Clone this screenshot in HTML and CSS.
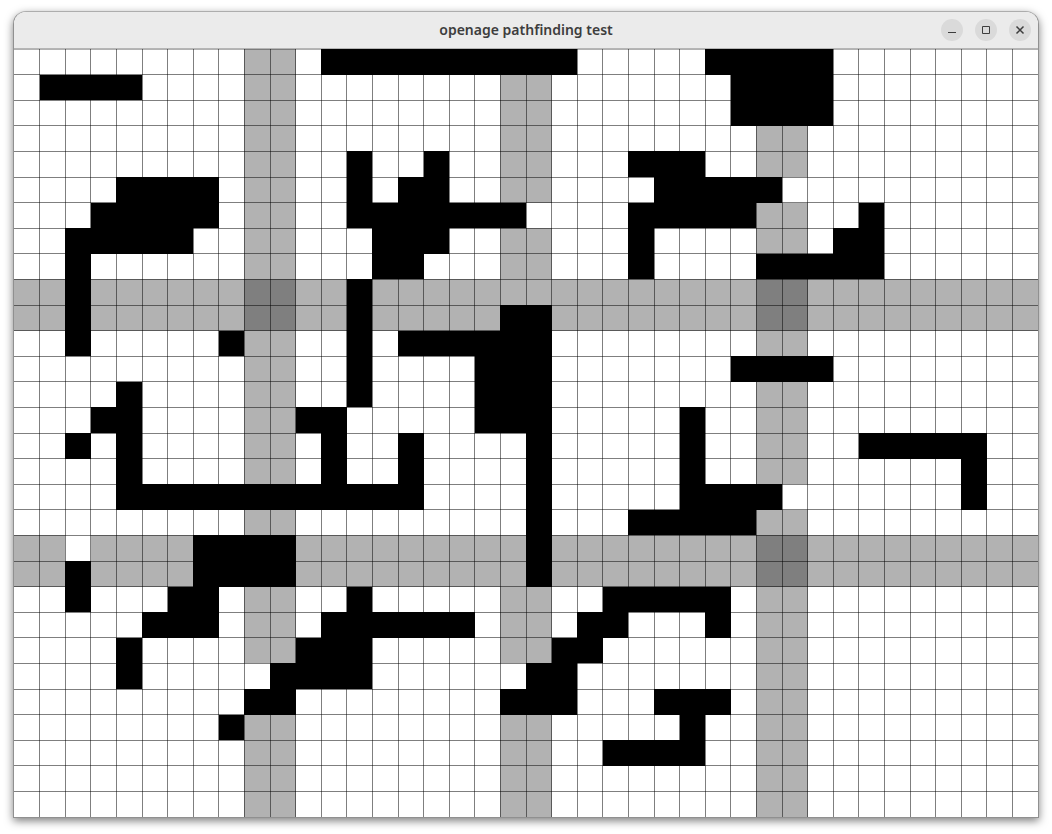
FILE: index.html
```html
<!DOCTYPE html>
<html lang="en">
<head>
<meta charset="utf-8">
<meta name="viewport" content="width=device-width, initial-scale=1">
<title>openage pathfinding test</title>
<link rel="stylesheet" href="styles.css">
</head>
<body>
<main class="window">
  <header class="titlebar">
    <h1 class="title">openage pathfinding test</h1>
    <div class="controls">
      <button class="control" type="button" aria-label="Minimize">
        <svg class="icon" viewBox="0 0 16 16" aria-hidden="true"><path d="M4 10.500h8"/></svg>
      </button>
      <button class="control" type="button" aria-label="Maximize">
        <svg class="icon" viewBox="0 0 16 16" aria-hidden="true"><path d="M4.500 4.500h7v7h-7z"/></svg>
      </button>
      <button class="control" type="button" aria-label="Close">
        <svg class="icon icon-close" viewBox="0 0 16 16" aria-hidden="true"><path d="M4.500 4.500l7 7M11.500 4.500l-7 7"/></svg>
      </button>
    </div>
  </header>
  <svg class="map" viewBox="0 0 40 30" role="img" aria-label="Cost field grid">
    <!-- raised-cost bands and their crossings -->
    <path class="cost" d="M9 0h2v30h-2z M19 0h2v30h-2z M29 0h2v30h-2z M0 9h40v2h-40z M0 19h40v2h-40z"/>
    <path class="cost-high" d="M9 9h2v2h-2z M29 9h2v2h-2z M29 19h2v2h-2z"/>
    <!-- default-cost cells inside the bands -->
    <path class="clear" d="M20 6h1v1h-1z M30 5h1v1h-1z M30 17h1v1h-1z M19 15h1v4h-1z M2 19h1v1h-1z M9 24h1v1h-1z M19 24h1v1h-1z"/>
    <path class="lines" d="M1 0v30M2 0v30M3 0v30M4 0v30M5 0v30M6 0v30M7 0v30M8 0v30M9 0v30M10 0v30M11 0v30M12 0v30M13 0v30M14 0v30M15 0v30M16 0v30M17 0v30M18 0v30M19 0v30M20 0v30M21 0v30M22 0v30M23 0v30M24 0v30M25 0v30M26 0v30M27 0v30M28 0v30M29 0v30M30 0v30M31 0v30M32 0v30M33 0v30M34 0v30M35 0v30M36 0v30M37 0v30M38 0v30M39 0v30"/>
    <path class="lines" d="M0 1h40M0 2h40M0 3h40M0 4h40M0 5h40M0 6h40M0 7h40M0 8h40M0 9h40M0 10h40M0 11h40M0 12h40M0 13h40M0 14h40M0 15h40M0 16h40M0 17h40M0 18h40M0 19h40M0 20h40M0 21h40M0 22h40M0 23h40M0 24h40M0 25h40M0 26h40M0 27h40M0 28h40M0 29h40"/>
    <path class="edge" d="M0 0h40v30"/>
    <!-- impassable cells, one run per row -->
    <path class="wall" d="
      M12 0h10v1h-10z M27 0h5v1h-5z
      M1 1h4v1h-4z M28 1h4v2h-4z
      M13 4h1v3h-1z M16 4h1v1h-1z M24 4h3v1h-3z
      M4 5h4v1h-4z M15 5h2v1h-2z M25 5h5v1h-5z
      M3 6h5v1h-5z M13 6h7v1h-7z M24 6h5v1h-5z M33 6h1v1h-1z
      M2 7h5v1h-5z M14 7h3v1h-3z M24 7h1v2h-1z M32 7h2v1h-2z
      M2 8h1v4h-1z M14 8h2v1h-2z M29 8h5v1h-5z
      M13 9h1v5h-1z M19 10h2v1h-2z
      M8 11h1v1h-1z M15 11h6v1h-6z
      M18 12h3v3h-3z M28 12h4v1h-4z
      M4 13h1v4h-1z M3 14h1v1h-1z M11 14h2v1h-2z M26 14h1v3h-1z
      M2 15h1v1h-1z M12 15h1v2h-1z M15 15h1v2h-1z M20 15h1v6h-1z M33 15h5v1h-5z
      M37 16h1v2h-1z
      M4 17h12v1h-12z M26 17h4v1h-4z
      M24 18h5v1h-5z
      M7 19h4v2h-4z
      M2 20h1v2h-1z
      M6 21h2v1h-2z M13 21h1v1h-1z M23 21h5v1h-5z
      M5 22h3v1h-3z M12 22h6v1h-6z M22 22h2v1h-2z M27 22h1v1h-1z
      M4 23h1v2h-1z M11 23h3v1h-3z M21 23h2v1h-2z
      M10 24h4v1h-4z M20 24h2v1h-2z
      M9 25h2v1h-2z M19 25h3v1h-3z M25 25h3v1h-3z
      M8 26h1v1h-1z M26 26h1v1h-1z
      M23 27h4v1h-4z"/>
  </svg>
</main>
</body>
</html>
```
FILE: styles.css
```css
* {
  box-sizing: border-box;
}

body {
  margin: 0;
  padding: 11px 13px 15px;
  background: #fff;
  font-family: "Noto Sans", "Open Sans", sans-serif;
}

.window {
  border: 1px solid #909090;
  border-top-color: #adadad;
  border-radius: 13px 13px 0 0;
  background: #fff;
  box-shadow: 0 3px 9px rgba(0, 0, 0, 0.5);
}

.titlebar {
  display: grid;
  grid-template-columns: 1fr auto 1fr;
  align-items: center;
  height: 37px;
  padding: 0 7px;
  border-bottom: 1px solid #b5b5b5;
  border-radius: 12px 12px 0 0;
  background: #ebebeb;
}

.title {
  grid-column: 2;
  margin: 0;
  color: #3d3d3d;
  font-size: 14px;
  font-weight: 600;
  line-height: 20px;
  white-space: nowrap;
}

.controls {
  display: flex;
  gap: 12px;
  justify-self: end;
}

.control {
  display: grid;
  place-items: center;
  width: 22px;
  height: 22px;
  padding: 0;
  border: 0;
  border-radius: 50%;
  background: #dadada;
}

.icon {
  width: 16px;
  height: 16px;
  fill: none;
  stroke: #3d3d3d;
}

.icon-close {
  stroke-width: 1.5;
}

.map {
  display: block;
  width: 100%;
  shape-rendering: crispEdges;
}

.cost {
  fill: #b2b2b2;
}

.cost-high {
  fill: #7f7f7f;
}

.clear {
  fill: #fff;
}

.wall {
  fill: #000;
}

.lines,
.edge {
  fill: none;
  stroke: rgba(0, 0, 0, 0.5);
  vector-effect: non-scaling-stroke;
}

.edge {
  stroke: rgba(0, 0, 0, 0.3);
}
```
